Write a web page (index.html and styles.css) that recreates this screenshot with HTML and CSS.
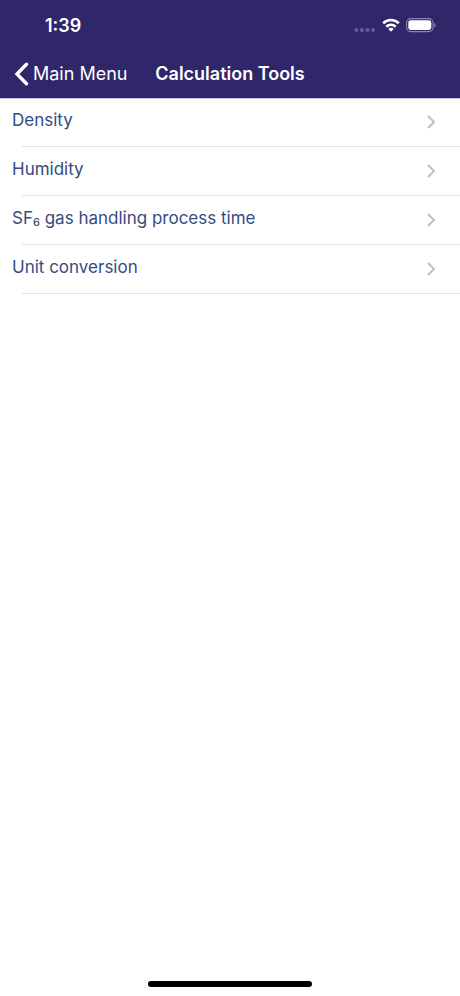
FILE: index.html
```html
<!DOCTYPE html>
<html lang="en">
<head>
<meta charset="utf-8">
<meta name="viewport" content="width=device-width, initial-scale=1">
<title>Calculation Tools</title>
<link rel="stylesheet" href="styles.css">
</head>
<body>
<header class="header">
  <div class="status">
    <time class="clock">1:39</time>
    <div class="indicators">
      <svg width="22" height="18" viewBox="0 0 22 18" fill="#625b94" aria-hidden="true"><circle cx="2.3" cy="13" r="2.1"/><circle cx="7.9" cy="13" r="2.1"/><circle cx="13.5" cy="13" r="2.1"/><circle cx="19.1" cy="13" r="2.1"/></svg>
      <svg width="18" height="18" viewBox="0 0 18 18" fill="none" stroke="#fff" stroke-width="2.6" aria-hidden="true"><path d="M1.2 6.2a11.2 11.2 0 0 1 15.600 0"/><path d="M4.300 9.700a6.800 6.800 0 0 1 9.400 0"/><path d="M9 14.700l-2.700-2.800a4 4 0 0 1 5.400 0z" fill="#fff" stroke="none"/></svg>
      <svg width="30" height="18" viewBox="0 0 30 18" aria-hidden="true"><rect x=".6" y="1.600" width="26.400" height="13" rx="4" fill="none" stroke="#8983ae" stroke-width="1.1"/><rect x="2.300" y="3.300" width="23" height="9.600" rx="2.400" fill="#fff"/><path d="M28 5.900c2 .8 2 3.600 0 4.400z" fill="#8983ae"/></svg>
    </div>
  </div>
  <nav class="navbar">
    <a class="back" href="#">
      <svg width="16" height="24" viewBox="0 0 16 24" fill="none" stroke="#fff" stroke-width="3.4" stroke-linecap="round" stroke-linejoin="miter" aria-hidden="true"><path d="M12.5 2.2L3 12l9.500 9.800"/></svg>
      <span>Main Menu</span>
    </a>
    <h1 class="title">Calculation Tools</h1>
  </nav>
</header>
<main>
  <ul class="list">
    <li><a class="row" href="#"><span>Density</span><svg class="chevron" width="10" height="14" viewBox="0 0 10 14" aria-hidden="true"><path d="M2 1l6 6-6 6"/></svg></a></li>
    <li><a class="row" href="#"><span>Humidity</span><svg class="chevron" width="10" height="14" viewBox="0 0 10 14" aria-hidden="true"><path d="M2 1l6 6-6 6"/></svg></a></li>
    <li><a class="row" href="#"><span>SF<sub>6</sub> gas handling process time</span><svg class="chevron" width="10" height="14" viewBox="0 0 10 14" aria-hidden="true"><path d="M2 1l6 6-6 6"/></svg></a></li>
    <li><a class="row" href="#"><span>Unit conversion</span><svg class="chevron" width="10" height="14" viewBox="0 0 10 14" aria-hidden="true"><path d="M2 1l6 6-6 6"/></svg></a></li>
  </ul>
</main>
<footer class="home"><div class="home-bar"></div></footer>
</body>
</html>
```
FILE: styles.css
```css
* { box-sizing: border-box; }
body {
  margin: 0;
  min-height: 100vh;
  display: flex;
  flex-direction: column;
  background: #fff;
  font-family: Inter, "Liberation Sans", sans-serif;
  font-size: 17px;
  line-height: 24px;
}
a { color: inherit; text-decoration: none; }
sub {
  font-size: 11px;
  font-weight: 500;
  line-height: 0;
  vertical-align: -2px;
}
.header {
  background: #2f276a;
  color: #fff;
  box-shadow: 0 1px #c9c6dc;
}
.status {
  height: 50px;
  padding: 2px 24px 0 45px;
  display: flex;
  align-items: center;
  justify-content: space-between;
}
.clock {
  font-size: 18px;
  font-weight: 600;
}
.indicators { display: flex; gap: 6px; }
.navbar {
  height: 48px;
  padding: 0 14px;
  display: grid;
  grid-template-columns: 1fr auto 1fr;
  align-items: center;
}
.back {
  display: flex;
  align-items: center;
  gap: 3px;
  font-size: 18px;
  white-space: nowrap;
}
.title {
  margin: 0;
  font-size: 18px;
  font-weight: 600;
}
main { flex: 1; }
.list {
  margin: 0;
  padding: 0;
  list-style: none;
  color: #344b80;
}
.row {
  height: 49px;
  padding: 0 24px 6px 12px;
  display: flex;
  align-items: center;
  justify-content: space-between;
  background: linear-gradient(#e1e1e4, #e1e1e4) 22px 100% / 100% 1px no-repeat;
}
.chevron {
  margin-top: 5px;
  fill: none;
  stroke: #bfbfc3;
  stroke-width: 2;
}
.home {
  padding: 9px;
  display: flex;
  justify-content: center;
}
.home-bar {
  width: 37%;
  height: 6px;
  border-radius: 3px;
  background: #000;
}
```
